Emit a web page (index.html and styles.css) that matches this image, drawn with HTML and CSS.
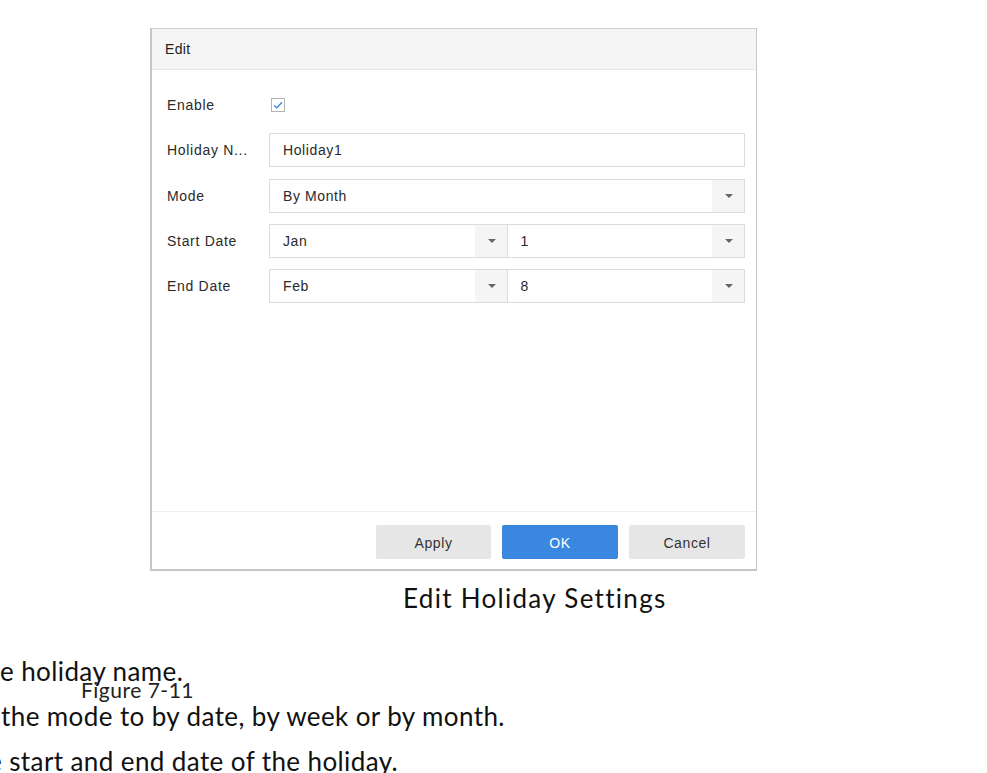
FILE: index.html
```html
<!DOCTYPE html>
<html>
<head>
<meta charset="utf-8">
<link rel="stylesheet" href="styles.css">
</head>
<body>
<div class="dialog">
  <div class="dlg-head">Edit</div>
  <div class="dlg-body">
    <div class="row">
      <div class="label">Enable</div>
      <div class="checkbox">
        <svg width="10" height="8" viewBox="0 0 10 8"><path d="M1 4.5 L3.8 6.8 L9 1.2" fill="none" stroke="#3a87e0" stroke-width="1.3"/></svg>
      </div>
    </div>
    <div class="row">
      <div class="label">Holiday N...</div>
      <div class="field"><span class="val">Holiday1</span></div>
    </div>
    <div class="row">
      <div class="label">Mode</div>
      <div class="field select"><span class="val">By Month</span><span class="arrow"></span></div>
    </div>
    <div class="row">
      <div class="label">Start Date</div>
      <div class="pair">
        <div class="field select"><span class="val">Jan</span><span class="arrow"></span></div>
        <div class="field select"><span class="val">1</span><span class="arrow"></span></div>
      </div>
    </div>
    <div class="row">
      <div class="label">End Date</div>
      <div class="pair">
        <div class="field select"><span class="val">Feb</span><span class="arrow"></span></div>
        <div class="field select"><span class="val">8</span><span class="arrow"></span></div>
      </div>
    </div>
  </div>
  <div class="dlg-foot">
    <button class="btn">Apply</button>
    <button class="btn primary">OK</button>
    <button class="btn">Cancel</button>
  </div>
</div>
<div class="caption">Edit Holiday Settings</div>
<div class="doc">
  <p class="line l1">e holiday name.</p>
  <span class="figno">Figure 7-11</span>
  <p class="line l2">the mode to by date, by week or by month.</p>
  <p class="line l3">e start and end date of the holiday.</p>
</div>
</body>
</html>
```
FILE: styles.css
```css
html, body {
  margin: 0;
  padding: 0;
  background: #ffffff;
  overflow: hidden;
}
body {
  width: 987px;
  height: 773px;
  font-family: "Liberation Sans", Arial, sans-serif;
}
.dialog {
  margin: 28px 0 0 150px;
  width: 604px;
  border-top: 1px solid #d2d2d2;
  border-left: 2px solid #c6c6c6;
  border-right: 1px solid #c6c6c6;
  border-bottom: 2px solid #c6c6c6;
  background: #fff;
}
.dlg-head {
  height: 40px;
  line-height: 40px;
  background: #f5f5f5;
  border-bottom: 1px solid #e6e6e6;
  padding-left: 13px;
  font-size: 14px;
  color: #222;
  letter-spacing: 0.3px;
}
.dlg-body {
  height: 423px;
  padding-top: 18px;
  display: flex;
  flex-direction: column;
  gap: 11px;
}
.row {
  display: flex;
  align-items: center;
  height: 34px;
  padding: 0 11px 0 15px;
}
.row + .row + .row {
  margin-top: 1px;
  margin-bottom: -1px;
}
.label {
  width: 102px;
  flex: none;
  font-size: 14px;
  color: #2a2a2a;
  letter-spacing: 0.7px;
}
.checkbox {
  width: 12px;
  height: 12px;
  border: 1px solid #b4b4b4;
  margin-left: 2px;
  display: flex;
  align-items: center;
  justify-content: center;
}
.field {
  flex: 1;
  height: 32px;
  border: 1px solid #dcdcdc;
  display: flex;
  align-items: center;
  font-size: 14px;
  color: #2a2a2a;
  letter-spacing: 0.6px;
  background: #fff;
}
.field .val {
  flex: 1;
  padding-left: 13px;
}
.select .arrow {
  width: 32px;
  height: 32px;
  background: #f5f5f5;
  position: relative;
  flex: none;
}
.select .arrow::after {
  content: "";
  position: absolute;
  left: 13px;
  top: 14px;
  border-left: 4px solid transparent;
  border-right: 4px solid transparent;
  border-top: 4px solid #666;
}
.pair {
  flex: 1;
  display: flex;
}
.pair .field + .field {
  border-left: none;
}
.dlg-foot {
  border-top: 1px solid #efefef;
  height: 44px;
  padding: 13px 11px 0 0;
  display: flex;
  justify-content: flex-end;
  gap: 11px;
}
.btn {
  width: 116px;
  height: 34px;
  border: none;
  border-radius: 2px;
  background: #e6e6e6;
  color: #333;
  font-family: "Liberation Sans", Arial, sans-serif;
  font-size: 14px;
  letter-spacing: 0.6px;
  padding: 2px 0 0;
}
.btn:first-child {
  width: 115px;
}
.btn.primary {
  background: #3a87e0;
  color: #fff;
}
.caption {
  margin: 9px 0 0 403px;
  font-family: Lato, "Open Sans", sans-serif;
  font-size: 26px;
  letter-spacing: 1.3px;
  color: #111;
  line-height: 36px;
}
.doc {
  position: relative;
  margin-top: 33px;
  font-family: Lato, "Open Sans", sans-serif;
  color: #111;
}
.line {
  margin: 0;
  font-size: 26px;
  letter-spacing: 0.4px;
  line-height: 45px;
  white-space: nowrap;
}
.l2 {
  padding-left: 1px;
}
.l3 {
  margin-left: -12px;
}
.figno {
  position: absolute;
  left: 81px;
  top: 29px;
  font-size: 21px;
  letter-spacing: 0.5px;
  line-height: 24px;
  color: #222;
}
```
